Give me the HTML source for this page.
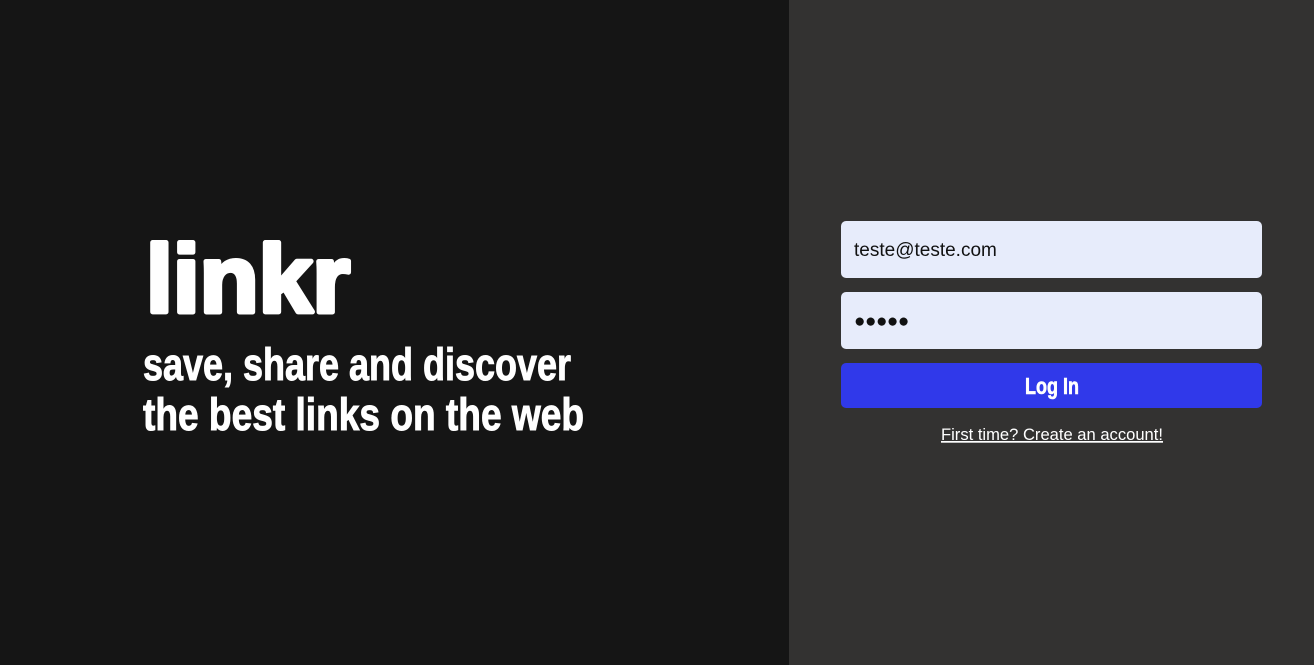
<!DOCTYPE html>
<html><head><meta charset="utf-8"><style>
html,body{margin:0;padding:0;width:1314px;height:665px;overflow:hidden;font-family:"Liberation Sans",sans-serif}
.l{position:absolute;left:0;top:0;width:789px;height:665px;background:#151515}
.r{position:absolute;left:789px;top:0;width:525px;height:665px;background:#333231}
.in{position:absolute;left:841px;width:421px;height:57px;background:#e7ecfb;border-radius:5px;box-sizing:border-box;padding-left:13px;font-size:19px;color:#111;line-height:60px}
.btn{position:absolute;left:841px;top:363px;width:421px;height:45px;background:#3039ea;border-radius:5px}
</style></head><body>
<div class="l"></div><div class="r"></div>
<svg style="position:absolute;left:0;top:0" width="789" height="665">
<text x="146" y="312" font-family="Liberation Sans" font-weight="bold" font-size="96" fill="#fff" stroke="#fff" stroke-width="5" stroke-linejoin="round" textLength="204" lengthAdjust="spacingAndGlyphs">linkr</text>
<text x="143" y="380" font-family="Liberation Sans" font-weight="bold" font-size="45" fill="#fff" stroke="#fff" stroke-width="1" textLength="428" lengthAdjust="spacingAndGlyphs">save, share and discover</text>
<text x="143" y="430" font-family="Liberation Sans" font-weight="bold" font-size="45" fill="#fff" stroke="#fff" stroke-width="1" textLength="441" lengthAdjust="spacingAndGlyphs">the best links on the web</text>
</svg>
<div class="in" style="top:221px">teste@teste.com</div>
<div class="in" style="top:292px;font-size:19px;line-height:59px;letter-spacing:-0.5px">●●●●●</div>
<div class="btn"></div>
<svg style="position:absolute;left:789px;top:0" width="525" height="665">
<text x="263" y="394" text-anchor="middle" font-family="Liberation Sans" font-weight="bold" font-size="23" fill="#fff" stroke="#fff" stroke-width="0.6" textLength="54" lengthAdjust="spacingAndGlyphs">Log In</text>
<text x="263" y="440" text-anchor="middle" font-family="Liberation Sans" font-size="17" fill="#fff" textLength="222" lengthAdjust="spacingAndGlyphs" text-decoration="underline">First time? Create an account!</text>
</svg>
</body></html>
